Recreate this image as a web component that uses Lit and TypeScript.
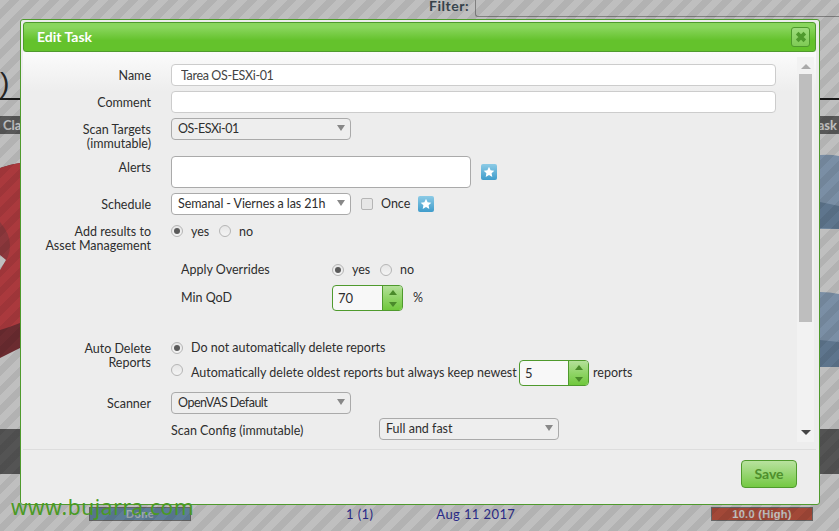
import { LitElement, html, css, svg } from "lit";
import { customElement } from "lit/decorators.js";

const star = html`<svg class="star" viewBox="0 0 16 16" aria-hidden="true"><defs><linearGradient id="sg" x1="0" y1="0" x2="0" y2="1"><stop offset="0" stop-color="#8ccbe6"/><stop offset="1" stop-color="#3f9ccb"/></linearGradient></defs><rect x="0" y="0" width="16" height="16" rx="2" fill="url(#sg)"/><path d="M8 2.8l1.6 3.4 3.7.45-2.7 2.55.7 3.7L8 11.1l-3.3 1.8.7-3.7L2.7 6.65l3.7-.45z" fill="#fff"/></svg>`;

const radio = (on: boolean) => html`<span class="radio ${on ? "on" : ""}"></span>`;

const yesNo = html`${radio(true)}<span class="opt">yes</span>${radio(false)}<span class="opt">no</span>`;

const select = (text: string, cls = "") => html`<div class="select ${cls}"><span>${text}</span><i class="arrow"></i></div>`;

const spinner = (v: string, w: number) => html`<div class="spin" style="width:${w}px"><span class="val">${v}</span><div class="btns"><b><i class="up"></i></b><b><i class="down"></i></b></div></div>`;

const charts = svg`<svg class="chart" viewBox="0 0 839 295" width="839" height="295" aria-hidden="true">
  <path d="M0 34 Q12 30 20 29 L20 214 L0 224 Z" fill="#8f3a40"/>
  <path d="M0 34 Q12 30 20 29 L20 189 Q10 193 0 196 Z" fill="#e34c51"/>
  <path d="M0 88 Q10 100 10 111 Q10 125 0 134 Z" fill="#bb4a50"/>
  <path d="M0 121 L6 126 L0 136 Z" fill="#ffffff"/>
  <path d="M820 21 Q830 20 839 22 L839 95 L820 95 Z" fill="#a3bedc"/>
  <path d="M820 68 Q830 70 839 72 L839 95 L820 94 Z" fill="#7d9cbc"/>
  <path d="M820 158 Q830 158 839 160 L839 233 L820 233 Z" fill="#a3bedc"/>
  <path d="M820 206 Q830 207 839 208 L839 233 L820 233 Z" fill="#7d9cbc"/>
</svg>`;

@customElement("app-root")
export class AppRoot extends LitElement {
  static styles = css`
    :host { display: block; position: relative; width: 839px; height: 531px; overflow: hidden; background: #fff;
      font-family: "Lato", sans-serif; font-size: 12.5px; color: #2e2e2e; }
    .page { display: flex; flex-direction: column; height: 531px; }
    .filter { height: 17px; display: flex; justify-content: flex-end; align-items: flex-start; gap: 6px; font-weight: 700; font-size: 14px; line-height: 12px; letter-spacing: .5px; color: #4c5c68; }
    .filter .box { width: 364px; height: 17px; box-sizing: border-box; border: 1px solid #aaa; border-width: 0 0 1px 1px; border-radius: 0 0 0 3px; background: #fff; }
    .head { height: 83px; box-sizing: border-box; border-bottom: 2px solid #222; display: flex; align-items: flex-end; font-size: 28px; line-height: 30px; color: #333; font-family: "Liberation Sans", sans-serif; }
    .tabs { margin-top: 16px; height: 18px; background: #767676; color: #fff; font-weight: 700; font-size: 13px; line-height: 18px; display: flex; justify-content: space-between; padding-left: 3px; white-space: nowrap; overflow: hidden; }
    .tabs span:last-child { margin-right: 2px; }
    .chart { display: block; flex: none; }
    .darkbar { height: 45px; background: #707070; flex: none; }
    .rows { flex: 1; display: flex; align-items: flex-start; padding: 33px 26px 0 89px; font-size: 13px; line-height: 14px; color: #3a3ab8; letter-spacing: .4px; }
    .bar { width: 102px; height: 14px; box-sizing: border-box; border: 1px solid #888; color: #fff; font-weight: 700; font-size: 11px; line-height: 12px; text-align: center; flex: none; }
    .bar.blue { background: #7ca6c8; color: #d6e2ec; }
    .bar.red { background: #d8604a; margin-left: auto; font-family: "Liberation Sans", sans-serif; letter-spacing: .3px; }
    .one { margin-left: 155px; } .date { margin-left: 63px; }
    .overlay { position: absolute; inset: 0; background: repeating-linear-gradient(135deg, rgba(0,0,0,.25) 0 7px, rgba(0,0,0,.3) 7px 14px); }

    .dialog { position: absolute; left: 20px; top: 19px; width: 800px; height: 486px; box-sizing: border-box; border: 1px solid #4f9a2d; border-radius: 3px; padding: 2px 3px 0 2px; background: #ededed; display: flex; flex-direction: column; }
    .title { height: 30px; flex: none; box-sizing: border-box; border: 1px solid #4f9a2d; border-radius: 3px; padding: 0 5px 0 13px; background: linear-gradient(#8ad65e 0, #8ad65e 15%, #64c22c 62%, #64c22c 100%); display: flex; align-items: center; justify-content: space-between; color: #fff; font-weight: 700; font-size: 14px; }
    .title > span { margin-top: -2px; }
    .close { width: 19px; height: 20px; box-sizing: border-box; border: 1px solid #4f9a2d; border-radius: 3px; background: linear-gradient(#9fdc7e, #7fcb55); display: flex; align-items: center; justify-content: center; }
    .close svg { width: 12px; height: 12px; }
    .body { flex: 1; min-height: 0; position: relative; display: flex; background: linear-gradient(#fbfbfb 0, #ededed 40px); overflow: hidden; }
    .form { flex: 1; padding-top: 12px; overflow: hidden; line-height: 14px; }
    .row { display: flex; min-height: 22px; }
    .lab { width: 128px; margin-right: 20px; text-align: right; padding-top: 5px; flex: none; }
    .ctl { flex: 1; display: flex; align-items: center; min-width: 0; }
    .top { align-items: flex-start; }
    input { width: 605px; height: 22px; box-sizing: border-box; border: 1px solid #ccc; border-radius: 4px; background: #fff; padding: 0 10px 0 9px; font: inherit; letter-spacing: -.35px; color: #444; outline: none; }
    .area { width: 300px; height: 32px; box-sizing: border-box; border: 1px solid #aaa; border-radius: 4px; background: #fff; }
    .select { width: 180px; height: 22px; box-sizing: border-box; border: 1px solid #aaa; border-radius: 4px; padding: 0 5px 0 6px; display: flex; align-items: center; justify-content: space-between; background: #eee; flex: none; white-space: nowrap; }
    .select.white { background: #fff; letter-spacing: -.1px; }
    .select.tight { letter-spacing: -.5px; }
    .arrow { width: 0; height: 0; border: 4px solid transparent; border-top: 6px solid #888; border-bottom: 0; margin-bottom: 3px; }
    .star { width: 16px; height: 16px; flex: none; }
    .radio { width: 12px; height: 12px; box-sizing: border-box; border: 1px solid #b5b5b5; border-radius: 50%; background: linear-gradient(#e6e6e6, #f4f4f4); flex: none; display: flex; align-items: center; justify-content: center; }
    .radio.on::after { content: ""; width: 6px; height: 6px; border-radius: 50%; background: #5a5a5a; }
    .opt { width: 28px; padding-left: 8px; flex: none; }
    .check { width: 12px; height: 12px; box-sizing: border-box; border: 1px solid #b5b5b5; border-radius: 2px; background: #e6e6e6; flex: none; margin: 0 8px 0 10px; }
    .once { width: 28px; margin-right: 9px; flex: none; }
    .spin { height: 26px; box-sizing: border-box; border: 1px solid #4f9a2d; border-radius: 4px; background: #f8f8f8; display: flex; overflow: hidden; flex: none; }
    .val { flex: 1; padding: 0 5px; line-height: 24px; font-size: 13px; }
    .btns { width: 19px; border-left: 1px solid #4f9a2d; display: flex; flex-direction: column; }
    .btns b { flex: 1; display: flex; align-items: center; justify-content: center; }
    .btns b:first-child { background: linear-gradient(#b4e09a, #90d468); }
    .btns b:last-child { background: linear-gradient(#90d468, #70c83c); }
    .up { width: 0; height: 0; border: 4px solid transparent; border-top: 0; border-bottom: 5px solid #4a8a2a; }
    .down { width: 0; height: 0; border: 4px solid transparent; border-bottom: 0; border-top: 5px solid #4a8a2a; }
    .bar-track { width: 17px; margin: 5px 2px 0 0; flex: none; background: #f2f2f2; display: flex; flex-direction: column; align-items: center; height: 385px; }
    .tri { width: 0; height: 0; border: 5px solid transparent; border-top: 0; border-bottom: 5px solid #aaa; margin-top: 7px; }
    .tri.dn { border: 5px solid transparent; border-bottom: 0; border-top: 5px solid #444; margin-top: 108px; }
    .thumb { width: 13px; height: 248px; margin-top: 5px; background: #bebebe; }
    .foot { height: 55px; flex: none; box-sizing: border-box; border-top: 1px solid #ddd; display: flex; justify-content: flex-end; padding: 10px 19px 0 0; }
    .save { width: 56px; height: 28px; box-sizing: border-box; border: 1px solid #4f9a2d; border-radius: 4px; background: linear-gradient(#b8e29f, #74c943); color: #4f8f2d; font-weight: 700; font-size: 14px; line-height: 26px; text-align: center; }
    .mark { position: absolute; left: 11px; top: 492px; font-size: 21px; line-height: 30px; color: #4a9a24; letter-spacing: .6px; font-family: "Noto Sans", sans-serif; }
    .indent { height: 26px; align-items: center; }
    .ind-lab { margin-left: 158px; width: 151px; flex: none; }
    .m5 { margin-top: 5px; }
    .targets { height: 33px; }
    .add { height: 40px; }
    .add .ctl { padding-top: 5px; }
    .auto { margin-top: 26px; height: 55px; }
    .auto .ctl { flex-direction: column; align-items: flex-start; padding-top: 4px; }
    .line { display: flex; align-items: center; height: 14px; }
    .line.tall { height: 26px; margin-top: 5px; }
    .line.tall > .radio { margin-bottom: 6px; }
    .txt { width: 324px; margin: 0 4px 0 8px; white-space: nowrap; flex: none; }
    .rep { margin-left: 4px; }
    .cfg { margin-left: 148px; width: 208px; flex: none; padding-top: 6px; }
  `;

  render() {
    return html`
      <div class="page">
        <div class="filter"><span>Filter:</span><div class="box"></div></div>
        <div class="head">)</div>
        <div class="tabs"><span>Classification</span><span>Task</span></div>
        ${charts}
        <div class="darkbar"></div>
        <div class="rows">
          <div class="bar blue">Done</div>
          <span class="one">1 (1)</span>
          <span class="date">Aug 11 2017</span>
          <div class="bar red">10.0 (High)</div>
        </div>
      </div>
      <div class="overlay"></div>
      <div class="dialog">
        <div class="title"><span>Edit Task</span>
          <div class="close"><svg viewBox="0 0 11 11"><path d="M2 2l7 7M9 2l-7 7" stroke="#4f9a2d" stroke-width="3.4" fill="none"/></svg></div>
        </div>
        <div class="body">
          <div class="form">
            <div class="row"><div class="lab">Name</div><div class="ctl"><input value="Tarea OS-ESXi-01" /></div></div>
            <div class="row m5"><div class="lab">Comment</div><div class="ctl"><input value="" /></div></div>
            <div class="row m5 targets"><div class="lab">Scan Targets<br />(immutable)</div><div class="ctl top">${select("OS-ESXi-01", "tight")}</div></div>
            <div class="row m5"><div class="lab">Alerts</div><div class="ctl"><div class="area"></div><span style="width:10px"></span>${star}</div></div>
            <div class="row m5"><div class="lab">Schedule</div><div class="ctl">${select("Semanal - Viernes a las 21h", "white")}<span class="check"></span><span class="once">Once</span>${star}</div></div>
            <div class="row m5 add"><div class="lab">Add results to<br />Asset Management</div><div class="ctl top">${yesNo}</div></div>
            <div class="row indent" style="margin-top:-3px"><span class="ind-lab">Apply Overrides</span>${yesNo}</div>
            <div class="row indent" style="margin-top:2px"><span class="ind-lab">Min QoD</span>${spinner("70", 71)}<span style="margin-left:10px">%</span></div>
            <div class="row auto"><div class="lab">Auto Delete<br />Reports</div><div class="ctl">
              <div class="line">${radio(true)}<span style="margin-left:8px">Do not automatically delete reports</span></div>
              <div class="line tall">${radio(false)}<span class="txt">Automatically delete oldest reports but always keep newest</span>${spinner("5", 70)}<span class="rep">reports</span></div>
            </div></div>
            <div class="row"><div class="lab">Scanner</div><div class="ctl">${select("OpenVAS Default", "tight")}</div></div>
            <div class="row" style="margin-top:4px"><span class="cfg">Scan Config (immutable)</span>${select("Full and fast")}</div>
          </div>
          <div class="bar-track"><i class="tri"></i><div class="thumb"></div><i class="tri dn"></i></div>
        </div>
        <div class="foot"><div class="save">Save</div></div>
      </div>
      <div class="mark">www.bujarra.com</div>
    `;
  }
}
